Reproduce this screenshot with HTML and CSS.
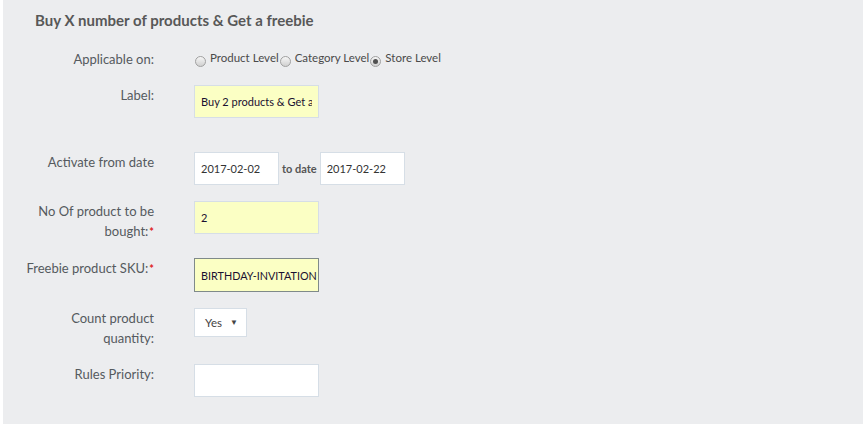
FILE: index.html
```html
<!DOCTYPE html>
<html>
<head>
<meta charset="utf-8">
<link rel="stylesheet" href="styles.css">
</head>
<body>
<div class="panel">
  <h2 class="title">Buy X number of products &amp; Get a freebie</h2>
  <div class="row row-radio">
    <div class="lbl">Applicable on:</div>
    <div class="ctl radios">
      <span class="radio"></span><span class="rtext">Product Level</span>
      <span class="radio"></span><span class="rtext">Category Level</span>
      <span class="radio checked"></span><span class="rtext">Store Level</span>
    </div>
  </div>
  <div class="row row-spaced">
    <div class="lbl">Label:</div>
    <div class="ctl"><input class="input yellow wide" type="text" value="Buy 2 products &amp; Get a freebie" readonly></div>
  </div>
  <div class="row">
    <div class="lbl">Activate from date</div>
    <div class="ctl dates">
      <input class="input date" type="text" value="2017-02-02" readonly>
      <span class="todate">to date</span>
      <input class="input date" type="text" value="2017-02-22" readonly>
    </div>
  </div>
  <div class="row">
    <div class="lbl"><span class="line">No Of product to be</span> <span class="line">bought:<span class="req">*</span></span></div>
    <div class="ctl"><input class="input yellow wide" type="text" value="2" readonly></div>
  </div>
  <div class="row">
    <div class="lbl">Freebie product SKU:<span class="req">*</span></div>
    <div class="ctl"><input class="input yellow wide focus" type="text" value="BIRTHDAY-INVITATION" readonly></div>
  </div>
  <div class="row">
    <div class="lbl"><span class="line">Count product</span> <span class="line">quantity:</span></div>
    <div class="ctl"><div class="select"><span>Yes</span><span class="arrow">▼</span></div></div>
  </div>
  <div class="row">
    <div class="lbl">Rules Priority:</div>
    <div class="ctl"><input class="input wide" type="text" value="" readonly></div>
  </div>
</div>
</body>
</html>
```

FILE: styles.css
```css
* { box-sizing: border-box; }
html, body { margin: 0; padding: 0; background: #ffffff; }
body { font-family: "Lato", "Open Sans", sans-serif; }
.panel {
  margin-left: 3px;
  width: 860px;
  height: 424px;
  background: #ecedef;
  padding: 10px 0 0 20px;
  overflow: hidden;
}
.title {
  margin: 0 0 19px 12px;
  font-size: 15px;
  line-height: 20px;
  font-weight: 700;
  color: #585858;
}
.row {
  display: grid;
  grid-template-columns: 131px auto;
  column-gap: 40px;
  align-items: start;
  margin-bottom: 16px;
}
.row-spaced { margin-bottom: 34px; }
.lbl {
  text-align: right;
  font-size: 13px;
  line-height: 20px;
  color: #555a5e;
}
.line { display: block; white-space: nowrap; }
.req { color: #e02020; font-weight: 700; font-size: 11px; margin-left: 1px; }
.ctl { display: flex; align-items: center; }
.radios { height: 20px; font-size: 11.5px; color: #4a4a4a; }
.radio {
  width: 11px; height: 11px;
  border-radius: 50%;
  border: 1px solid #a0a0a0;
  background: linear-gradient(#f6f6f6, #d0d0d0);
  margin: 5px 4px 0 1px;
  display: inline-flex;
  align-items: center;
  justify-content: center;
  flex: none;
}
.radio.checked::after {
  content: "";
  width: 5px; height: 5px;
  border-radius: 50%;
  background: #505050;
}
.rtext { line-height: 16px; margin-top: -2px; }
.input {
  height: 33px;
  margin: 0;
  border: 1px solid #d6dee6;
  border-radius: 0;
  background: #ffffff;
  font-family: "Lato", "Open Sans", sans-serif;
  font-size: 11px;
  color: #222;
  padding: 0 6px;
  outline: none;
}
.yellow { background: #fbffc4; color: #1a1030; }
.wide { width: 125px; }
.focus { border-color: #7f8a8a; height: 34px; padding-right: 0; font-size: 10.8px; }
.date { width: 85px; color: #333; }
.todate { font-size: 11px; font-weight: 700; color: #555; margin: 0 3px 0 3px; }
.select {
  width: 53px; height: 29px;
  background: #fff;
  border: 1px solid #d6dee6;
  font-size: 11.5px;
  color: #444;
  display: flex;
  align-items: center;
  justify-content: space-between;
  padding: 0 8px 0 10px;
}
.arrow { font-size: 8px; color: #444; margin-top: -2px; }
```
